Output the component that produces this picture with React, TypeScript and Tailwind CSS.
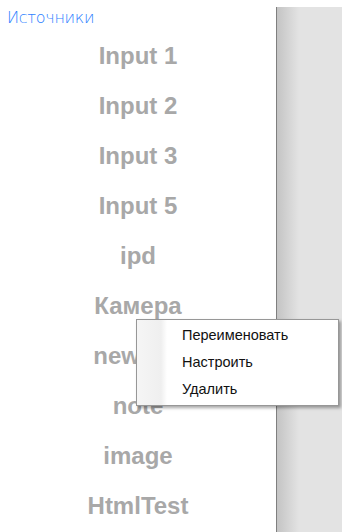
import React from "react";

const items = ["Input 1", "Input 2", "Input 3", "Input 5", "ipd", "Камера", "newtest", "note", "image", "HtmlTest"];

export default function App() {
  return (
    <div className="relative flex h-[532px] w-[342px] overflow-hidden bg-white">
      <div className="flex w-[276px] flex-col bg-white">
        <div className="h-[31px] pl-[7px] pt-[9px] text-[16px] leading-[18px] tracking-[-0.3px] text-[#2f82ff] [font-family:'DejaVu_Sans',sans-serif] font-extralight">
          Источники
        </div>
        <div className="flex flex-col">
          {items.map((it) => (
            <div
              key={it}
              className="flex h-[50px] items-center justify-center text-[24px] font-bold text-[#a8a8a8] [font-family:'Liberation_Sans',Arial,sans-serif]"
            >
              {it}
            </div>
          ))}
        </div>
      </div>
      <div className="flex flex-1 flex-col pt-[7px]">
        <div className="flex flex-1 border-l border-[#7f7f7f] bg-[linear-gradient(to_right,#c4c4c4,#e3e3e3_22px,#e3e3e3)]" />
      </div>

      <div className="absolute left-[136px] top-[319px] flex w-[203px] border border-[#979797] bg-white py-[2px] shadow-[2px_2px_3px_rgba(0,0,0,0.35)] [font-family:'Liberation_Sans',Arial,sans-serif]">
        <div className="absolute bottom-0 left-0 top-0 w-[30px] bg-[linear-gradient(to_right,#f5f5f5,#efefef_80%,#ffffff)]" />
        <div className="relative flex flex-1 flex-col pl-[45px]">
          <div className="flex h-[27px] items-center text-[14.5px] text-[#111]">Переименовать</div>
          <div className="flex h-[27px] items-center text-[14.5px] text-[#111]">Настроить</div>
          <div className="flex h-[27px] items-center text-[14.5px] text-[#111]">Удалить</div>
        </div>
      </div>
    </div>
  );
}
